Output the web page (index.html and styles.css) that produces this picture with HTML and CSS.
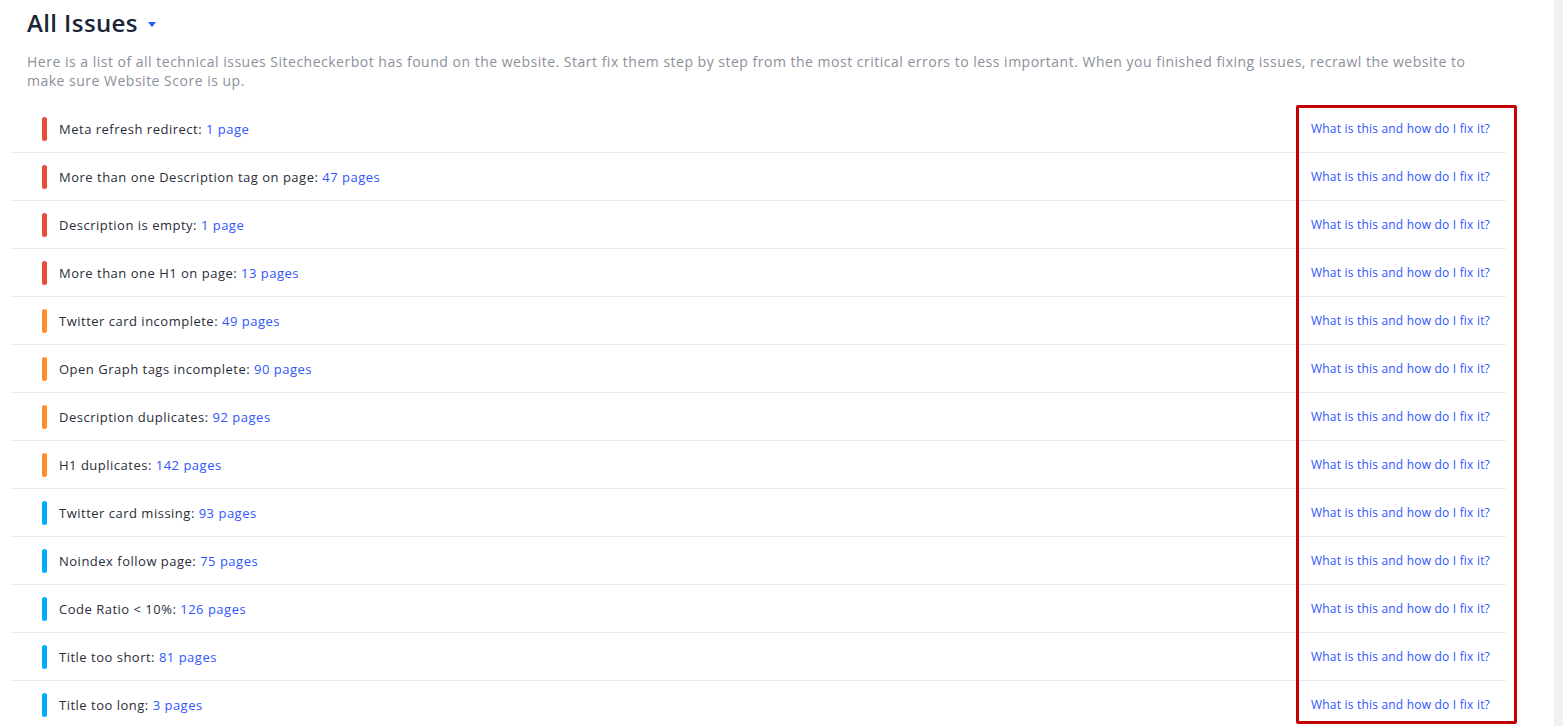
FILE: index.html
```html
<!DOCTYPE html>
<html lang="en">
<head>
  <meta charset="UTF-8" />
  <meta name="viewport" content="width=device-width, initial-scale=1.0" />
  <title>All Issues</title>
  <link rel="stylesheet" href="styles.css">
</head>
<body>
  <div class="page">
    <div class="content">

      <!-- HEADER -->
      <h1 class="title">All Issues <span class="caret"></span></h1>
      <p class="intro">Here is a list of all technical issues Sitecheckerbot has found on the website. Start fix them step by step from the most critical errors to less important. When you finished fixing issues, recrawl the website to make sure Website Score is up.</p>

      <!-- ISSUES -->
      <div class="issues">
        <div class="issue"><span class="mark critical"></span><span class="name">Meta refresh redirect: <a href="#">1 page</a></span><a class="help" href="#">What is this and how do I fix it?</a></div>
        <div class="issue"><span class="mark critical"></span><span class="name">More than one Description tag on page: <a href="#">47 pages</a></span><a class="help" href="#">What is this and how do I fix it?</a></div>
        <div class="issue"><span class="mark critical"></span><span class="name">Description is empty: <a href="#">1 page</a></span><a class="help" href="#">What is this and how do I fix it?</a></div>
        <div class="issue"><span class="mark critical"></span><span class="name">More than one H1 on page: <a href="#">13 pages</a></span><a class="help" href="#">What is this and how do I fix it?</a></div>
        <div class="issue"><span class="mark warning"></span><span class="name">Twitter card incomplete: <a href="#">49 pages</a></span><a class="help" href="#">What is this and how do I fix it?</a></div>
        <div class="issue"><span class="mark warning"></span><span class="name">Open Graph tags incomplete: <a href="#">90 pages</a></span><a class="help" href="#">What is this and how do I fix it?</a></div>
        <div class="issue"><span class="mark warning"></span><span class="name">Description duplicates: <a href="#">92 pages</a></span><a class="help" href="#">What is this and how do I fix it?</a></div>
        <div class="issue"><span class="mark warning"></span><span class="name">H1 duplicates: <a href="#">142 pages</a></span><a class="help" href="#">What is this and how do I fix it?</a></div>
        <div class="issue"><span class="mark notice"></span><span class="name">Twitter card missing: <a href="#">93 pages</a></span><a class="help" href="#">What is this and how do I fix it?</a></div>
        <div class="issue"><span class="mark notice"></span><span class="name">Noindex follow page: <a href="#">75 pages</a></span><a class="help" href="#">What is this and how do I fix it?</a></div>
        <div class="issue"><span class="mark notice"></span><span class="name">Code Ratio &lt; 10%: <a href="#">126 pages</a></span><a class="help" href="#">What is this and how do I fix it?</a></div>
        <div class="issue"><span class="mark notice"></span><span class="name">Title too short: <a href="#">81 pages</a></span><a class="help" href="#">What is this and how do I fix it?</a></div>
        <div class="issue"><span class="mark notice"></span><span class="name">Title too long: <a href="#">3 pages</a></span><a class="help" href="#">What is this and how do I fix it?</a></div>

        <!-- highlight round the help links -->
        <div class="highlight"></div>
      </div>
    </div>
    <div class="rail"></div>
  </div>
</body>
</html>
```

FILE: styles.css
```css
body {
  font-family: "Open Sans", "Liberation Sans", sans-serif;
  background-color: #fff;
  margin: 0;
  padding: 0;
  height: 726px;
  overflow: hidden;
}

.page {
  display: flex;
  height: 100%;
}

.content {
  flex: 1;
}

.rail {
  width: 9px;
  background-color: #f0f1f5;
}

.title {
  margin: 0;
  padding: 7px 0 0 27px;
  font-size: 24px;
  font-weight: 600;
  letter-spacing: 0.4px;
  color: #1b2539;
  line-height: 32px;
  display: flex;
  align-items: center;
}

.caret {
  width: 0;
  height: 0;
  margin-left: 10px;
  margin-top: 2px;
  border-left: 4px solid transparent;
  border-right: 4px solid transparent;
  border-top: 5px solid #1f5cff;
}

.intro {
  margin: 13px 0 0 27px;
  max-width: 1445px;
  font-size: 14px;
  line-height: 19px;
  letter-spacing: 0.5px;
  color: #8c909b;
}

.issues {
  position: relative;
  margin: 15px 0 0 10px;
  width: 1496px;
}

.issue {
  display: flex;
  align-items: center;
  height: 47px;
  padding: 0 16px 0 32px;
  border-bottom: 1px solid #e9ebef;
  font-size: 13px;
  letter-spacing: 0.5px;
  color: #2a2d3a;
}

.issue:last-of-type {
  border-bottom: none;
}

.mark {
  width: 5px;
  height: 24px;
  border-radius: 3px;
  margin-right: 12px;
}

.critical { background-color: #e74c3c; }
.warning { background-color: #fd8f26; }
.notice { background-color: #00aaff; }

.name {
  flex: 1;
}

.issue a {
  color: #2f55ff;
  text-decoration: none;
}

.issue .help {
  font-size: 12px;
  letter-spacing: 0.2px;
}

.highlight {
  position: absolute;
  left: 1286px;
  top: 0;
  width: 215px;
  height: 613px;
  border: 3px solid #c10000;
  border-radius: 2px;
}
```
